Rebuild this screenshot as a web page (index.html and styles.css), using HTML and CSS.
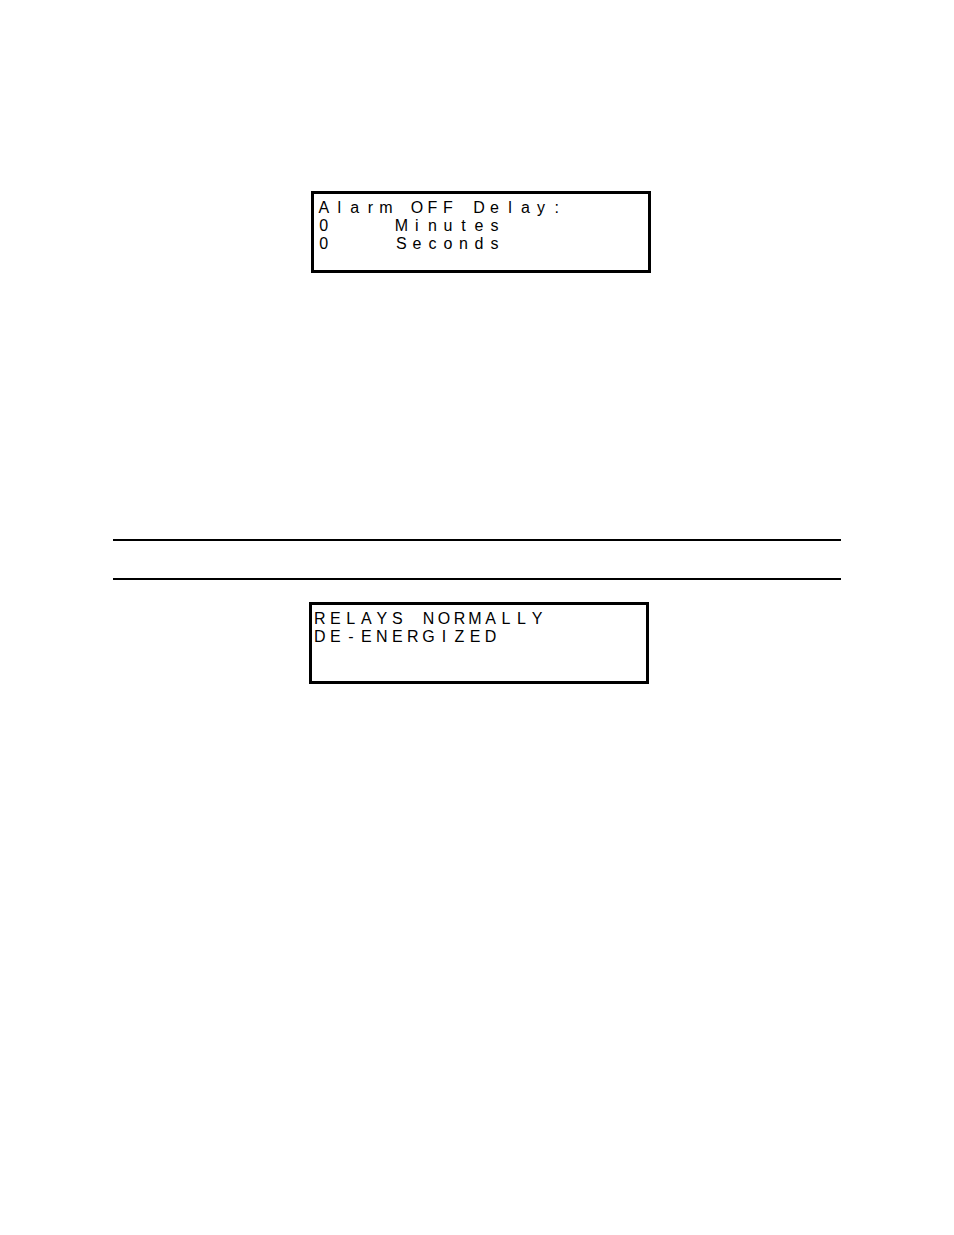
FILE: index.html
```html
<!DOCTYPE html>
<html lang="en">
<head>
  <meta charset="UTF-8" />
  <meta name="viewport" content="width=device-width, initial-scale=1.0"/>
  <title>Relay Alarm Settings</title>
  <link rel="stylesheet" href="styles.css">
</head>
<body>
  <main class="page">
    <section class="delay-section">
      <div class="display">
        <div class="line">Alarm OFF Delay:</div>
        <div class="line">0    Minutes</div>
        <div class="line">0    Seconds</div>
      </div>
    </section>

    <div class="title-bar"></div>

    <section class="relay-section">
      <div class="display display-flush">
        <div class="line">RELAYS NORMALLY</div>
        <div class="line">DE-ENERGIZED</div>
      </div>
    </section>
  </main>

  <script>
    // one cell per character, like the LCD module
    document.querySelectorAll(".line").forEach((line) => {
      const chars = [...line.textContent];
      line.textContent = "";
      chars.forEach((char) => {
        const cell = document.createElement("span");
        cell.className = "cell";
        cell.textContent = char;
        line.appendChild(cell);
      });
    });
  </script>
</body>
</html>
```
FILE: styles.css
```css
* {
  box-sizing: border-box;
}
body {
  font-family: "Liberation Sans", Arial, sans-serif;
  background-color: #fff;
  color: #000;
  margin: 0;
}
.page {
  max-width: 954px;
  margin: 0 auto;
  padding: 191px 113px 64px;
}
.delay-section {
  padding-left: 8px;
  margin-bottom: 266px;
}
.title-bar {
  height: 41px;
  border-top: 2px solid #000;
  border-bottom: 2px solid #000;
  margin-bottom: 22px;
}
.relay-section {
  padding-left: 4px;
}
.display {
  max-width: 340px;
  min-height: 82px;
  margin: 0 auto;
  padding: 5px 6px 5px 2px;
  border: 3px solid #000;
}
.display-flush {
  padding: 5px 8px 5px 0;
}
.line {
  display: grid;
  grid-template-columns: repeat(21, minmax(0, 1fr));
  font-size: 16px;
  line-height: 18px;
}
.cell {
  text-align: center;
  white-space: pre;
}
```
